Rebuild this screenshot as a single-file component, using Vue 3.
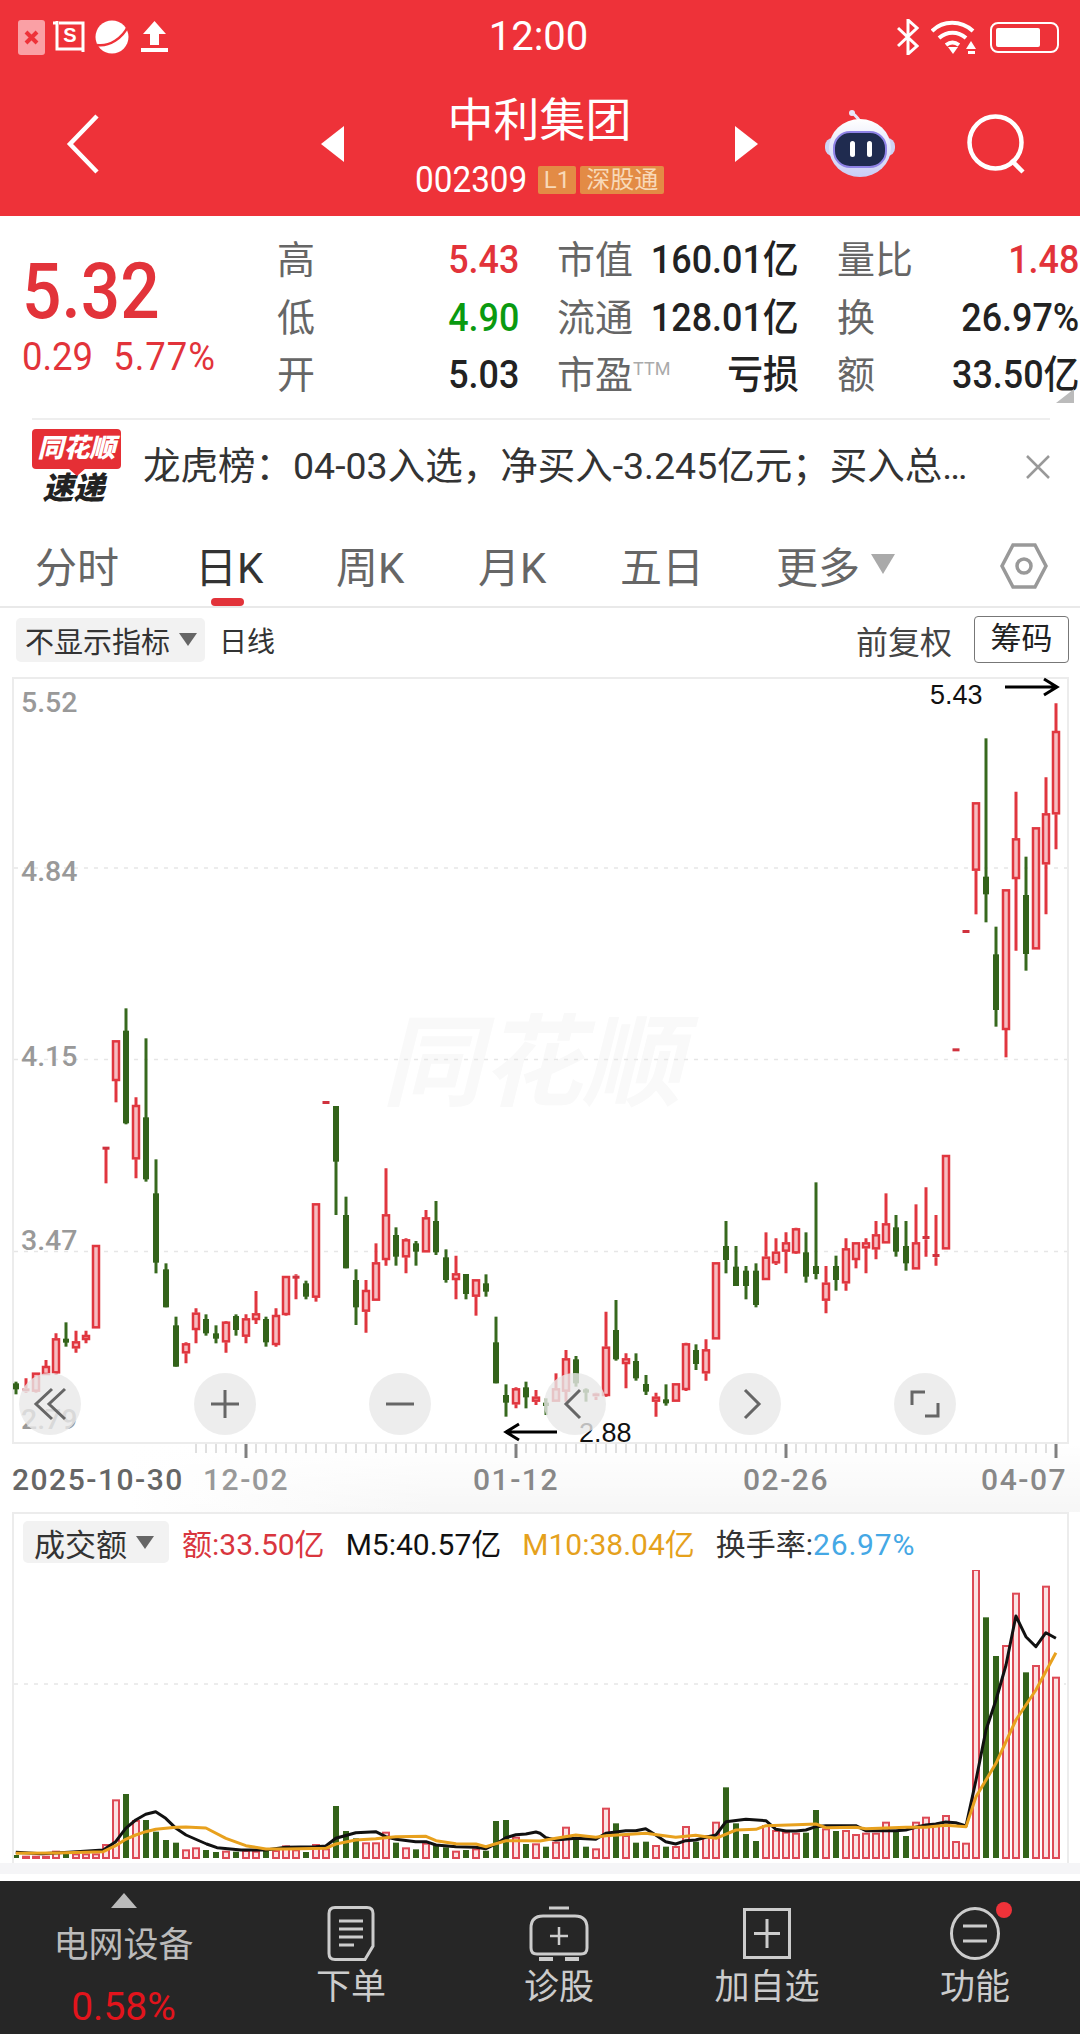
<template>
  <div class="page">
    <header class="top">
      <div class="status">
        <div class="status-left">
          <span class="x-box">
            <svg width="27" height="35" viewBox="0 0 27 35"><path d="M8 12l11 11M19 12L8 23" stroke="#EE3239" stroke-width="4" fill="none"/></svg>
          </span>
          <svg width="32" height="32" viewBox="0 0 32 32" fill="none" stroke="#fff" stroke-width="3">
            <path d="M0 2h4M4 0v28h26M30 31v-29h-24" />
            <text x="17" y="21" class="s-mark" text-anchor="middle">S</text>
          </svg>
          <svg width="34" height="34" viewBox="0 0 34 34">
            <circle cx="17" cy="17" r="16.5" fill="#fff"/>
            <path d="M2 25C14 27 28 18 33 6" stroke="#EE3239" stroke-width="2.5" fill="none"/>
          </svg>
          <svg width="27" height="32" viewBox="0 0 27 32" fill="#fff">
            <path d="M13.5 0L25 13h-7v11H9V13H2z"/><rect y="27" width="27" height="4"/>
          </svg>
        </div>
        <div class="clock">12:00</div>
        <div class="status-right">
          <svg width="22" height="36" viewBox="0 0 22 36" fill="none" stroke="#fff" stroke-width="3">
            <path d="M1 9l19 18-9 8V1l9 8-19 18"/>
          </svg>
          <svg width="46" height="34" viewBox="0 0 46 34" fill="none" stroke="#fff" stroke-width="4">
            <path d="M1 11C12 0 30 0 42 11M8 18c8-7 19-7 27 0M15 25c4-3 9-3 13 0"/>
            <path d="M22 34l-5-7h10z" fill="#fff" stroke="none"/>
            <path d="M40 21l5 8h-10zM37 31h7v3h-7z" fill="#fff" stroke="none"/>
          </svg>
          <div class="battery"><span></span></div>
        </div>
      </div>
      <div class="nav">
        <div class="nav-back">
          <svg width="34" height="60" viewBox="0 0 34 60" fill="none" stroke="#fff" stroke-width="4.5"><path d="M31 2L4 30l27 28"/></svg>
        </div>
        <svg class="nav-arrow" width="23" height="36" viewBox="0 0 23 36"><path d="M23 0v36L0 18z" fill="#fff"/></svg>
        <div class="nav-title">
          <div class="stock-name">中利集团</div>
          <div class="stock-code">
            <span>002309</span>
            <em class="tag">L1</em>
            <em class="tag">深股通</em>
          </div>
        </div>
        <svg class="nav-arrow" width="23" height="36" viewBox="0 0 23 36"><path d="M0 0v36l23-18z" fill="#fff"/></svg>
        <div class="nav-tools">
          <svg width="70" height="68" viewBox="0 0 70 68">
            <defs>
              <linearGradient id="helmet" x1="0" y1="0" x2="0" y2="1">
                <stop offset="0" stop-color="#fff"/><stop offset="1" stop-color="#c9cdf5"/>
              </linearGradient>
            </defs>
            <path d="M35 12C33 7 30 6 28 3" stroke="#e8e6f8" stroke-width="3" fill="none"/>
            <circle cx="27" cy="3" r="3" fill="#e8e6f8"/>
            <rect x="0" y="28" width="70" height="18" rx="8" fill="#cfd3f4"/>
            <ellipse cx="35" cy="38" rx="31" ry="29" fill="url(#helmet)"/>
            <rect x="9" y="22" width="52" height="35" rx="16" fill="#1f2b4f" stroke="#8f83e6" stroke-width="2"/>
            <rect x="25" y="31" width="5" height="16" rx="2.5" fill="#fff"/>
            <rect x="42" y="31" width="5" height="16" rx="2.5" fill="#fff"/>
          </svg>
          <svg width="60" height="60" viewBox="0 0 60 60" fill="none" stroke="#fff" stroke-width="4.5">
            <circle cx="28.5" cy="28.5" r="26"/><path d="M44 46l12 12"/>
          </svg>
        </div>
      </div>
    </header>

    <section class="quote">
      <div class="price-box">
        <div class="price">5.32</div>
        <div class="change"><span>0.29</span><span class="pct">5.77%</span></div>
      </div>
      <div class="stats">
        <div v-for="s in stats" :key="s.label" class="stat">
          <span class="stat-label">{{ s.label }}<sup v-if="s.sup">{{ s.sup }}</sup></span>
          <span class="stat-value" :class="s.tone">{{ s.value }}</span>
        </div>
      </div>
      <i class="corner"></i>
    </section>

    <section class="news">
      <div class="news-logo">
        <div class="logo-red">同花顺</div>
        <div class="logo-black">速递</div>
      </div>
      <div class="news-text">龙虎榜：04-03入选，净买入-3.245亿元；买入总…</div>
      <svg class="news-close" width="24" height="24" viewBox="0 0 24 24"><path d="M1 1l22 22M23 1L1 23" stroke="#999" stroke-width="2.5"/></svg>
    </section>

    <nav class="tabs">
      <span v-for="t in tabs" :key="t.name" class="tab" :class="{ active: t.active }" :style="{ width: t.w + 'px' }">{{ t.name }}</span>
      <i class="tab-tri"></i>
      <svg class="tab-set" width="48" height="46" viewBox="0 0 48 46" fill="none" stroke="#999" stroke-width="3.5">
        <path d="M13 2h22l11 21-11 21H13L2 23z"/><circle cx="24" cy="23" r="7"/>
      </svg>
    </nav>

    <div class="toolbar">
      <div class="pill">不显示指标<i class="tri"></i></div>
      <span class="line-type">日线</span>
      <span class="fq">前复权</span>
      <span class="chip">筹码</span>
    </div>

    <div class="chart">
      <svg class="chart-svg" width="1080" height="835" viewBox="0 677 1080 835">
        <defs>
          <linearGradient id="axisShade" x1="0" y1="0" x2="1" y2="0">
            <stop offset="0.12" stop-color="#fff"/><stop offset="0.4" stop-color="#f5f5f5"/><stop offset="1" stop-color="#f5f5f5"/>
          </linearGradient>
          <linearGradient id="axisFade" x1="0" y1="0" x2="0" y2="1">
            <stop offset="0" stop-color="#fff" stop-opacity="1"/><stop offset="1" stop-color="#fff" stop-opacity="0.15"/>
          </linearGradient>
        </defs>
        <rect x="0" y="1444" width="1080" height="68" fill="url(#axisShade)"/>
        <rect x="0" y="1444" width="1080" height="68" fill="url(#axisFade)"/>
        <rect x="13" y="678" width="1055" height="765" fill="#fff" stroke="#ececec" stroke-width="2"/>
        <text x="382" y="1098" class="mark">同花顺</text>
        <line v-for="g in [868, 1059.5, 1251.5]" :key="g" x1="14" x2="1067" :y1="g" :y2="g" class="grid"/>
        <text v-for="l in priceLabels" :key="l.t" x="21" :y="l.y" class="price-label">{{ l.t }}</text>

        <g v-for="c in candles" :key="c.x">
          <template v-if="c.up">
            <path :d="`M${c.x} ${c.hi}V${c.top}M${c.x} ${c.bot}V${c.lo}`" stroke="#E0363F" stroke-width="3"/>
            <rect v-if="c.flat" :x="c.x - 3.5" :y="c.top" width="7" height="3" fill="#D0323E"/>
            <rect v-else :x="c.x - 3" :y="c.top + 1" width="6" :height="c.bot - c.top - 2" fill="#f6bcc0" stroke="#E0363F" stroke-width="2.5"/>
          </template>
          <template v-else>
            <path :d="`M${c.x} ${c.hi}V${c.lo}`" stroke="#37691E" stroke-width="3"/>
            <rect :x="c.x - 3" :y="c.top" width="6" :height="c.bot - c.top" fill="#33631A"/>
          </template>
        </g>

        <text x="930" y="704" class="note">5.43</text>
        <path d="M1005 687h51M1044 679l13 8-13 8" class="note-arrow"/>
        <path d="M557 1432h-51M519 1424l-13 8 13 8" class="note-arrow"/>
        <text x="579" y="1442" class="note">2.88</text>

        <path v-for="t in ticks" :key="t.x" :d="`M${t.x} 1444V${t.major ? 1458 : 1453}`" :stroke="t.major ? '#808080' : '#c0c0c0'" :stroke-width="t.major ? 3 : 1"/>
        <text v-for="d in dates" :key="d.t" :x="d.x" y="1490" class="date" :fill="d.c" :text-anchor="d.a">{{ d.t }}</text>
      </svg>

      <div class="chart-btns">
        <button v-for="b in buttons" :key="b.name" class="round">
          <svg width="36" height="36" viewBox="0 0 36 36" fill="none" stroke="#666" stroke-width="3">
            <path :d="b.d"/>
          </svg>
        </button>
      </div>
    </div>

    <section class="vol">
      <div class="vol-head">
        <div class="pill pill-vol">成交额<i class="tri"></i></div>
        <span class="v-red">额:33.50亿</span>
        <span class="v-black">M5:40.57亿</span>
        <span class="v-orange">M10:38.04亿</span>
        <span class="v-dark">换手率:<b>26.97%</b></span>
      </div>
      <svg width="1054" height="293" viewBox="14 1570 1054 293">
        <line x1="14" x2="1066" y1="1684" y2="1684" class="grid"/>
        <template v-for="b in bars" :key="b.x">
          <rect v-if="b.up" :x="b.x - 3" :y="b.top + 1" width="6" :height="1857 - b.top" fill="#fbe3e4" stroke="#DD4A56" stroke-width="2"/>
          <rect v-else :x="b.x - 3" :y="b.top" width="6" :height="1858 - b.top" fill="#33631A"/>
        </template>
        <polyline :points="m5" class="ma ma5"/>
        <polyline :points="m10" class="ma ma10"/>
      </svg>
    </section>

    <div class="gap"></div>

    <footer class="bar">
      <div class="sector">
        <i class="sector-tri"></i>
        <span class="sector-name">电网设备</span>
        <span class="sector-pct">0.58%</span>
      </div>
      <div class="action">
        <svg width="48" height="55" viewBox="0 0 48 55" fill="none" stroke="#ccc" stroke-width="3">
          <path d="M8 1.5h32q6 0 6 6V40L38 53.5H8q-6 0-6-6V7.5q0-6 6-6z"/>
          <path d="M12 15h24M12 23h24M12 31h24M12 39h15" stroke-width="3"/>
        </svg>
        <span>下单</span>
      </div>
      <div class="action">
        <svg width="60" height="55" viewBox="0 0 60 55" fill="none" stroke="#ccc" stroke-width="3">
          <path d="M20 2h20M14 10h32q12 0 12 12v20q0 6-6 6H8q-6 0-6-6V22q0-12 12-12z"/>
          <path d="M30 21v18M21 30h18" stroke-width="2.5"/>
          <path d="M10 53h14M36 53h14" stroke-width="4"/>
        </svg>
        <span>诊股</span>
      </div>
      <div class="action">
        <svg width="48" height="51" viewBox="0 0 48 51" fill="none" stroke="#ccc" stroke-width="3">
          <rect x="1.5" y="1.5" width="45" height="48"/><path d="M24 11v29M11 25.500h26"/>
        </svg>
        <span>加自选</span>
      </div>
      <div class="action">
        <svg class="fn-icon" width="50" height="53" viewBox="0 0 50 53" fill="none" stroke="#ccc" stroke-width="3">
          <ellipse cx="25" cy="26.500" rx="23.500" ry="25"/><path d="M13 19h24M13 34h24"/>
        </svg>
        <i class="dot"></i>
        <span>功能</span>
      </div>
    </footer>
  </div>
</template>

<script setup>
const stats = [
  { label: '高', value: '5.43', tone: 'red' },
  { label: '市值', value: '160.01亿' },
  { label: '量比', value: '1.48', tone: 'red' },
  { label: '低', value: '4.90', tone: 'green' },
  { label: '流通', value: '128.01亿' },
  { label: '换', value: '26.97%' },
  { label: '开', value: '5.03' },
  { label: '市盈', sup: 'TTM', value: '亏损' },
  { label: '额', value: '33.50亿' }
]

const tabs = [
  { name: '分时', w: 160 },
  { name: '日K', w: 141, active: true },
  { name: '周K', w: 142 },
  { name: '月K', w: 142 },
  { name: '五日', w: 156 },
  { name: '更多', w: 84 }
]

const priceLabels = [
  { t: '5.52', y: 712 },
  { t: '4.84', y: 881 },
  { t: '4.15', y: 1066 },
  { t: '3.47', y: 1250 },
  { t: '2.79', y: 1429 }
]

const dates = [
  { t: '2025-10-30', x: 12, c: '#666', a: 'start' },
  { t: '12-02', x: 246, c: '#999', a: 'middle' },
  { t: '01-12', x: 516, c: '#888', a: 'middle' },
  { t: '02-26', x: 786, c: '#888', a: 'middle' },
  { t: '04-07', x: 1067, c: '#888', a: 'end' }
]

const buttons = [
  { name: 'first', d: 'M20 3L4 18l16 15M33 3L17 18l16 15' },
  { name: 'plus', d: 'M18 4v28M4 18h28' },
  { name: 'minus', d: 'M4 18h28' },
  { name: 'prev', d: 'M23 4L9 18l14 14' },
  { name: 'next', d: 'M13 4l14 14-14 14' },
  { name: 'full', d: 'M18 6H5v13M18 30h13V17' }
]

// [涨=1, 最高, 实体上沿, 实体下沿, 最低]，坐标是从截图量出来的
const rawCandles = [
  [0,1145,1150,1168,1183],[1,1135,1165,1175,1178],[1,1118,1118,1175,1178],[1,1080,1098,1125,1125],
  [1,1000,1015,1120,1125],[0,967,1016,1028,1040],[1,992,1024,1045,1058],[1,992,1005,1020,1030],
  [1,735,735,985,985],[1,440,440,445,550],[1,121,121,243,307],[0,25,92,370,373],
  [1,292,315,478,535],[0,115,352,538,545],[0,478,580,788,820],[0,790,808,922,922],
  [0,950,976,1100,1100],[1,1027,1030,1060,1090],[1,925,938,990,1030],[0,943,957,1000,1007],
  [0,976,1000,1016,1030],[1,963,965,1027,1058],[0,943,948,990,1007],[1,943,955,1010,1030],
  [1,873,940,960,972],[0,950,957,1027,1040],[1,925,945,1035,1040],[1,828,828,945,947],
  [1,823,827,833,898],[0,842,850,890,898],[1,610,610,893,905],[1,303,303,312,312],
  [0,318,318,485,645],[0,590,645,805,805],[0,808,840,922,975],[1,840,870,935,998],
  [1,730,787,902,902],[1,505,643,780,797],[0,682,705,770,797],[1,715,718,772,820],
  [0,723,730,755,797],[1,630,652,757,757],[0,603,663,757,765],[0,748,772,840,848],
  [1,767,820,840,898],[0,822,822,882,898],[1,838,838,890,947],[0,823,850,875,890],
  [0,950,1027,1150,1150],[0,1153,1185,1208,1250],[1,1162,1165,1213,1225],[0,1145,1162,1192,1225],
  [1,1170,1190,1205,1215],[0,1195,1208,1218,1245],[1,1120,1165,1205,1205],[1,1050,1075,1175,1205],
  [0,1068,1078,1150,1160],[0,1165,1168,1178,1205],[1,1178,1180,1190,1200],[1,935,1040,1188,1190],
  [0,900,990,1078,1082],[1,1060,1075,1092,1165],[0,1060,1083,1135,1142],[0,1125,1152,1175,1185],
  [1,1178,1190,1205,1250],[0,1153,1198,1210,1217],[1,1150,1150,1205,1205],[1,1028,1030,1170,1173],
  [0,1033,1050,1092,1110],[1,1018,1048,1120,1142],[1,787,787,1018,1018],[0,663,738,780,820],
  [0,738,800,858,858],[0,798,812,858,898],[0,790,812,915,922],[1,697,770,840,840],
  [1,715,755,790,795],[1,697,727,755,820],[1,683,685,760,762],[0,697,757,830,848],
  [0,547,798,822,838],[1,798,848,902,940],[0,767,798,840,872],[1,715,745,850,872],
  [1,727,727,780,805],[1,715,727,745,820],[1,663,703,748,778],[1,580,670,730,730],
  [0,645,682,755,770],[0,663,738,790,812],[1,613,727,808,808],[1,562,708,718,770],
  [1,645,762,772,797],[1,465,465,748,748]
]
// 最后 11 根是按另一张裁图量的，基准不同
const lastCandles = [
  [1,1105,1105,1113,1113],[1,750,750,758,758],[1,367,367,572,703],[0,175,590,643,727],
  [0,740,823,990,1040],[1,628,628,1050,1132],[1,335,475,597,812],[0,530,645,822,872],
  [1,442,442,808,808],[1,292,400,553,703],[1,70,153,403,508]
]
const toCandle = (row, i, base) => {
  const [up, hi, top, bot, lo] = row
  const y = v => base + v / 3
  return {
    x: 16 + i * 10,
    up: up === 1,
    flat: bot - top < 12,
    hi: y(hi),
    top: y(top),
    bot: y(bot),
    lo: y(lo)
  }
}
const candles = [
  ...rawCandles.map((r, i) => toCandle(r, i, 1000)),
  ...lastCandles.map((r, i) => toCandle(r, i + rawCandles.length, 680))
]

const ticks = []
for (let x = 196; x <= 1056; x += 10) {
  ticks.push({ x, major: x === 246 || x === 516 || x === 786 || x === 1056 })
}

const barUp = [0,1,1,1,1,0,1,1,1,1,1,0,1,0,0,0,0,1,1,0,0,1,0,1,1,0,1,1,1,0,1,1,0,0,0,1,1,1,0,1,0,1,0,0,1,0,1,0,0,0,1,0,1]
const barTop = [495,497,497,497,482,490,490,490,490,462,328,312,390,390,425,450,458,478,472,480,486,482,485,480,482,482,480,466,478,486,462,475,348,423,445,457,457,425,458,472,478,458,465,472,482,480,475,482,393,390,440,462,460]
const barUp2 = [0,1,1,0,0,1,1,0,1,0,0,1,0,1,1,0,1,1,0,0,0,0,1,1,1,1,0,0,1,0,1,1,1,1,1,0,0,1,1,1,1,1,1,1,0,0,1,1,0,1,1,1]
const barTop2 = [890,875,830,865,890,895,773,820,855,878,875,885,890,888,828,875,855,815,712,820,852,873,825,840,845,848,848,780,835,843,840,852,848,848,815,845,858,815,800,820,795,873,878,57,202,318,285,128,367,345,107,380]
const bars = [
  ...barTop.map((t, i) => ({ x: 16 + i * 10, up: barUp[i] === 1, top: 1690 + t / 3 })),
  ...barTop2.map((t, i) => ({ x: 546 + i * 10, up: barUp2[i] === 1, top: 1550 + t / 3 }))
]

// 量图的两条均线，前半段和后半段分别按裁图量
const toPoints = (a, xBase, yBase) => {
  const out = []
  for (let i = 0; i < a.length; i += 2) {
    out.push(`${(xBase + a[i] / 2.9037).toFixed(1)},${(yBase + a[i + 1] / 3).toFixed(1)}`)
  }
  return out
}
const m5 = [
  ...toPoints([46,487,120,491,200,487,300,480,336,455,365,415,394,390,423,373,452,365,481,385,511,415,540,435,600,462,630,473,700,480,772,480,830,472,917,470,946,468,975,445,1033,428,1091,425,1120,440,1150,448,1207,455,1237,455,1266,465,1324,470,1382,472,1411,476,1440,462,1469,443,1498,434,1527,432,1556,426], 0, 1690),
  ...toPoints([0,850,17,863,46,870,104,865,162,868,191,850,249,842,278,842,307,836,336,855,365,875,394,882,423,872,452,870,481,862,511,855,540,815,598,808,656,812,685,838,714,843,743,843,772,840,801,830,830,827,917,827,946,842,1033,842,1062,840,1091,832,1120,825,1149,822,1178,816,1207,818,1237,828,1266,690,1295,540,1324,450,1353,345,1382,198,1411,260,1440,290,1469,248,1498,265], 540, 1550)
].join(' ')
const m10 = [
  ...toPoints([46,490,162,489,300,485,336,467,365,448,394,435,423,425,452,418,511,412,540,411,598,414,656,445,714,467,772,477,830,477,946,475,975,462,1033,450,1091,446,1149,440,1237,439,1266,452,1324,461,1382,462,1411,470,1469,452,1527,452], 0, 1690),
  ...toPoints([0,873,46,865,104,855,162,862,191,857,307,850,394,862,452,856,511,865,569,840,627,838,656,827,743,824,801,822,830,833,917,832,946,836,1062,832,1120,832,1178,826,1237,830,1266,740,1324,640,1382,510,1440,420,1498,308], 540, 1550)
].join(' ')
</script>

<style>
html, body {
  margin: 0;
  background: #fff;
}
</style>

<style scoped>
.page {
  width: 1080px;
  height: 2034px;
  overflow: hidden;
  background: #fff;
  font-family: Roboto, "Noto Sans CJK SC", sans-serif;
  color: #333;
}

.top {
  height: 216px;
  background: #EE3239;
  color: #fff;
}

.status {
  height: 72px;
  display: grid;
  grid-template-columns: 1fr auto 1fr;
  align-items: center;
  padding: 0 21px 0 18px;
  box-sizing: border-box;
}
.status-left {
  display: flex;
  align-items: center;
  gap: 8px;
}
.status-left svg:nth-child(3) {
  margin-left: 2px;
}
.status-left svg:nth-child(4) {
  margin-left: 4px;
}
.x-box {
  width: 27px;
  height: 35px;
  display: block;
  background: #FAA0A5;
  border-radius: 3px;
}
.s-mark {
  font: 700 20px "Liberation Sans", sans-serif;
  fill: #fff;
  stroke: none;
}
.clock {
  font-size: 40px;
  line-height: 74px;
  font-weight: 400;
}
.status-right {
  display: flex;
  justify-content: flex-end;
  align-items: center;
  gap: 12px;
}
.status-right svg:nth-child(2) {
  margin-right: 1px;
}
.battery {
  width: 69px;
  height: 31px;
  box-sizing: border-box;
  border: 2px solid #fff;
  border-radius: 8px;
  padding: 4px;
}
.battery span {
  display: block;
  width: 44px;
  height: 100%;
  background: #fff;
  border-radius: 2px;
}

.nav {
  height: 144px;
  display: grid;
  grid-template-columns: 321px 23px 391px 23px 1fr;
  align-items: center;
}
.nav-back {
  padding-left: 66px;
  display: flex;
}
.nav-arrow {
  display: block;
}
.nav-title {
  text-align: center;
}
.stock-name {
  font-size: 46px;
  line-height: 60px;
  margin-bottom: 12px;
}
.stock-code {
  display: flex;
  justify-content: center;
  align-items: center;
  gap: 4px;
  font-size: 37px;
  line-height: 36px;
  font-weight: 400;
}
.stock-code span {
  display: inline-block;
  width: 113px;
  margin-right: 6px;
  transform: scaleX(0.9);
  transform-origin: 0 50%;
  white-space: nowrap;
}
.tag {
  font-style: normal;
  font-size: 24px;
  font-weight: 400;
  line-height: 28px;
  padding: 0 6px;
  background: #E38B45;
  color: #F8D9B8;
  border-radius: 2px;
}
.nav-tools {
  display: flex;
  align-items: center;
  gap: 72px;
  padding-left: 67px;
}

.quote {
  position: relative;
  height: 202px;
  display: flex;
  box-sizing: border-box;
  padding-top: 13px;
}
.price-box {
  width: 277px;
  padding-left: 22px;
  box-sizing: border-box;
  color: #E2333A;
}
.price {
  font-size: 78px;
  line-height: 80px;
  font-weight: 500;
  margin-top: 23px;
  transform: scaleX(0.89);
  transform-origin: 0 50%;
}
.change {
  display: flex;
  gap: 21px;
  font-size: 38px;
  line-height: 44px;
  margin-top: 3px;
  transform: scaleX(0.96);
  transform-origin: 0 50%;
  white-space: nowrap;
}
.pct {
  letter-spacing: 1px;
}
.stats {
  display: grid;
  grid-template-columns: repeat(3, 242px);
  grid-auto-rows: 57.5px;
  column-gap: 38px;
  padding-top: 3px;
}
.stat {
  display: flex;
  justify-content: space-between;
  align-items: baseline;
  line-height: 57.5px;
  white-space: nowrap;
}
.stat-label {
  font-size: 38px;
  color: #666;
  position: relative;
}
.stat-label sup {
  position: absolute;
  font-size: 18px;
  color: #aaa;
  top: 10px;
  left: 100%;
  line-height: 24px;
}
.stat-value {
  font-size: 39px;
  font-weight: 500;
  color: #222;
  transform: scaleX(0.92);
  transform-origin: 100% 50%;
}
.red {
  color: #E2333A;
}
.green {
  color: #0A9A10;
}
.corner {
  position: absolute;
  right: 6px;
  bottom: 15px;
  width: 0;
  height: 0;
  border-left: 18px solid transparent;
  border-bottom: 14px solid #bbb;
}

.news {
  height: 94px;
  margin: 0 30px 0 32px;
  border-top: 2px solid #eee;
  box-sizing: border-box;
  display: flex;
  align-items: center;
  position: relative;
}
.news-logo {
  width: 89px;
  text-align: center;
  flex: none;
  margin-top: 2px;
}
.logo-red {
  height: 40px;
  line-height: 38px;
  background: #E52F35;
  color: #fff;
  font-size: 26px;
  font-weight: 900;
  font-style: italic;
  border-radius: 4px;
  position: relative;
  margin-bottom: 4px;
}
.logo-red::after {
  content: "";
  position: absolute;
  left: 36px;
  bottom: -7px;
  border-left: 9px solid transparent;
  border-right: 9px solid transparent;
  border-top: 8px solid #E52F35;
}
.logo-black {
  line-height: 32px;
  font-size: 31px;
  font-weight: 900;
  font-style: italic;
  color: #222;
  padding-right: 6px;
}
.news-text {
  margin: 0 0 7px 22px;
  font-size: 37.500px;
  white-space: nowrap;
  color: #333;
}
.news-close {
  position: absolute;
  right: 0;
  top: 35px;
}

.tabs {
  margin-top: 10px;
  height: 86px;
  border-bottom: 2px solid #e9e9e9;
  box-sizing: border-box;
  display: flex;
  align-items: center;
  padding-left: 35px;
  position: relative;
}
.tab {
  font-size: 42px;
  color: #666;
  line-height: 86px;
  height: 84px;
  padding-top: 4px;
  box-sizing: border-box;
  position: relative;
  flex: none;
  white-space: nowrap;
}
.tab.active {
  color: #333;
}
.tab.active::after {
  content: "";
  position: absolute;
  left: 16px;
  bottom: 0;
  width: 33px;
  height: 8px;
  background: #E2333A;
  border-radius: 4px;
}
.tab-tri {
  width: 0;
  height: 0;
  border-left: 12px solid transparent;
  border-right: 12px solid transparent;
  border-top: 20px solid #aaa;
  margin-left: 11px;
}
.tab-set {
  position: absolute;
  left: 1000px;
  top: 21px;
}

.toolbar {
  height: 69px;
  display: flex;
  align-items: center;
  box-sizing: border-box;
  padding: 0 11px 6px 16px;
}
.pill {
  display: flex;
  align-items: center;
  height: 44px;
  width: 189px;
  box-sizing: border-box;
  padding-left: 9px;
  background: #f2f2f2;
  border-radius: 5px;
  font-size: 29px;
  color: #333;
  white-space: nowrap;
}
.tri {
  margin-left: 9px;
  border-left: 9px solid transparent;
  border-right: 9px solid transparent;
  border-top: 13px solid #666;
}
.line-type {
  margin-left: 14px;
  font-size: 28px;
  color: #333;
}
.fq {
  margin-left: auto;
  font-size: 32px;
  color: #444;
}
.chip {
  margin-left: 22px;
  width: 95px;
  height: 47px;
  line-height: 44px;
  box-sizing: border-box;
  border: 1px solid #777;
  border-radius: 4px;
  font-size: 31px;
  text-align: center;
  color: #222;
}

.chart {
  position: relative;
  height: 835px;
}
.chart-svg {
  display: block;
}
.grid {
  stroke: #e6e6e6;
  stroke-width: 1.500;
  stroke-dasharray: 4 6;
}
.mark {
  font-size: 100px;
  font-weight: 700;
  font-style: italic;
  fill: #f9f9f9;
}
.price-label {
  font-size: 28.500px;
  font-weight: 500;
  fill: #999;
}
.note {
  font: 27px "Liberation Sans", sans-serif;
  fill: #111;
}
.note-arrow {
  fill: none;
  stroke: #000;
  stroke-width: 3;
}
.date {
  font-size: 30px;
  font-weight: 500;
  letter-spacing: 1.500px;
}
.chart-btns {
  position: absolute;
  left: 19px;
  top: 696px;
  display: flex;
  gap: 113px;
}
.round {
  width: 62px;
  height: 62px;
  padding: 0;
  border: 0;
  border-radius: 50%;
  background: rgba(232, 232, 232, 0.8);
  display: flex;
  align-items: center;
  justify-content: center;
}

.vol {
  height: 351px;
  margin: 0 11px 0 12px;
  box-sizing: border-box;
  border: solid #ececec;
  border-width: 2px 2px 0;
}
.vol svg {
  display: block;
}
.vol-head {
  height: 56px;
  display: flex;
  align-items: center;
  gap: 21px;
  padding-left: 9px;
  box-sizing: border-box;
  font-size: 30px;
  white-space: nowrap;
}
.pill-vol {
  width: 146px;
  height: 42px;
  font-size: 31px;
  padding-left: 11px;
  margin-right: -8px;
}
.v-red {
  color: #D9363E;
}
.v-black {
  color: #111;
}
.v-orange {
  color: #E5A11C;
}
.v-dark {
  color: #333;
}
.v-dark b {
  font-weight: 400;
  letter-spacing: 0.8px;
  color: #45A8E5;
}
.ma {
  fill: none;
  stroke-width: 3;
  stroke-linejoin: round;
}
.ma5 {
  stroke: #111;
}
.ma10 {
  stroke: #E8A11E;
}

.gap {
  height: 18px;
  background: linear-gradient(#f5f5f7 11px, #fff 11px);
}

.bar {
  height: 153px;
  background: #262626;
  display: grid;
  grid-template-columns: 247px repeat(4, 208px);
  color: #ccc;
}
.sector {
  display: flex;
  flex-direction: column;
  align-items: center;
  padding-top: 12px;
}
.sector-tri {
  border-left: 13px solid transparent;
  border-right: 13px solid transparent;
  border-bottom: 15px solid #bbb;
}
.sector-name {
  font-size: 35px;
  line-height: 50px;
  margin-top: 13px;
  color: #bbb;
}
.sector-pct {
  font-size: 39px;
  line-height: 44px;
  margin-top: 14px;
  color: #E2141C;
}
.action {
  position: relative;
  display: flex;
  flex-direction: column;
  align-items: center;
  padding-top: 25px;
  font-size: 35px;
}
.action svg {
  display: block;
  height: 55px;
}
.action span {
  line-height: 50px;
  margin-top: 2px;
}
.dot {
  position: absolute;
  left: 125px;
  top: 21px;
  width: 16px;
  height: 16px;
  border-radius: 50%;
  background: #EE3239;
}
</style>
